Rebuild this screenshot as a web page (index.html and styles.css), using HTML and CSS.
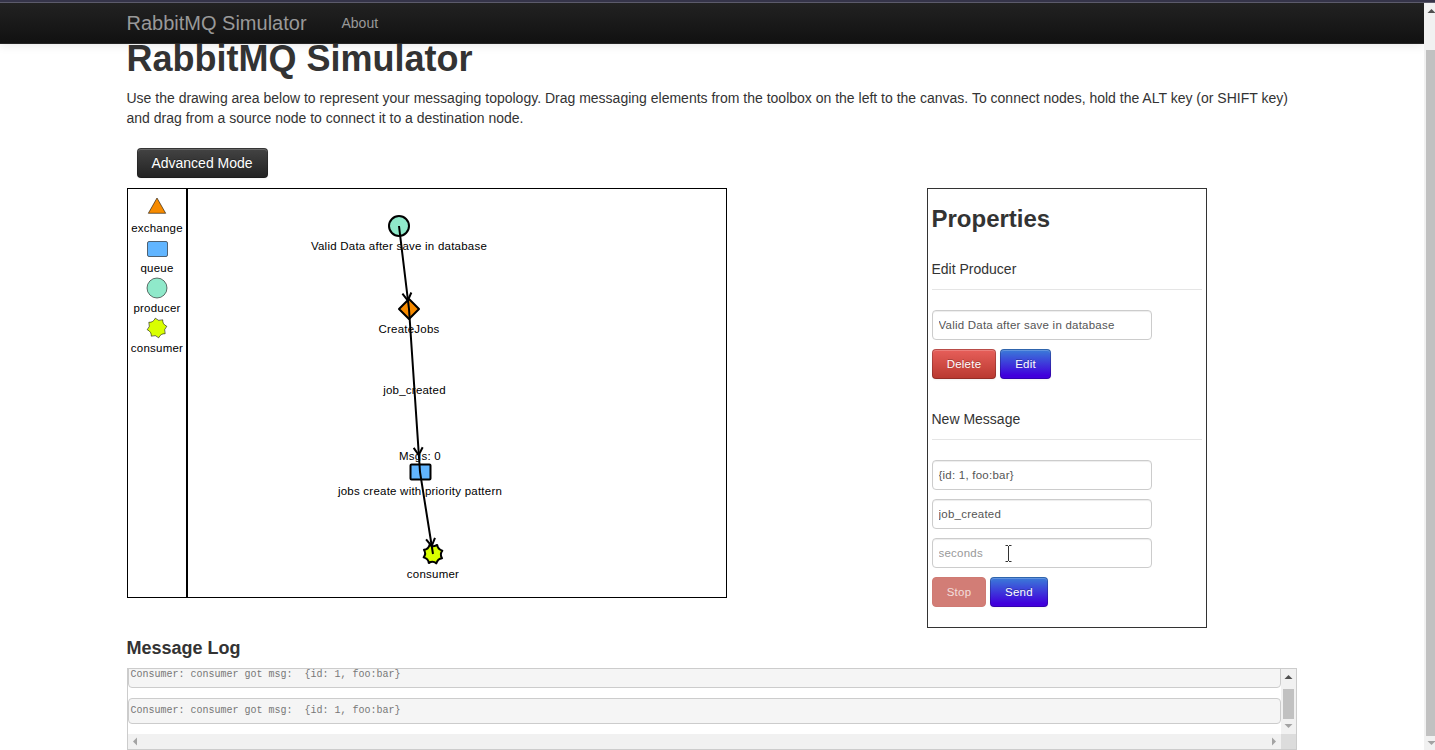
FILE: index.html
```html
<!DOCTYPE html>
<html lang="en">
<head>
<meta charset="utf-8">
<title>RabbitMQ Simulator</title>
<link rel="stylesheet" href="styles.css">
</head>
<body>
<div class="window-edge"></div>
<div class="viewport">
  <div class="page">
    <nav class="navbar">
      <a class="brand">RabbitMQ Simulator</a>
      <a class="nav-link">About</a>
    </nav>
    <main class="container">
      <h1>RabbitMQ Simulator</h1>
      <p class="intro">Use the drawing area below to represent your messaging topology. Drag messaging elements from the toolbox on the left to the canvas. To connect nodes, hold the ALT key (or SHIFT key) and drag from a source node to connect it to a destination node.</p>
      <button class="btn btn-inverse">Advanced Mode</button>
      <div class="workspace">
        <svg class="canvas" width="600" height="410" viewBox="127 188 600 410">
          <defs>
            <path id="gear" d="M-1.700 -9.800Q1.400 -6.300 5.700 -8.200Q5.400 -3.700 9.800 -1.700Q6.300 1.400 8.200 5.700Q3.700 5.400 1.700 9.800Q-1.400 6.300 -5.700 8.200Q-5.400 3.700 -9.800 1.700Q-6.300 -1.400 -8.200 -5.700Q-3.700 -5.400 -1.700 -9.800Z"/>
            <path id="head" d="M-4.500 -7.500L0 0L4.500 -7.500"/>
          </defs>
          <rect x="127.5" y="188.5" width="599" height="409" fill="#fff" stroke="#000"/>
          <path d="M187 188V598" stroke="#000" stroke-width="2"/>
          <g class="tool-shapes">
            <path d="M157 198L165.700 213.300H148.300Z" fill="#f78b00"/>
            <rect x="147.500" y="241.500" width="20" height="15" rx="1.500" fill="#61b5ff"/>
            <circle cx="157" cy="288" r="10" fill="#8fe9ca"/>
            <use href="#gear" x="157" y="328" fill="#d9ff00"/>
          </g>
          <g class="label">
            <text x="157" y="232">exchange</text>
            <text x="157" y="272">queue</text>
            <text x="157" y="312">producer</text>
            <text x="157" y="352">consumer</text>
          </g>
          <g class="node-shapes">
            <circle cx="399" cy="226" r="10" fill="#8fe9ca"/>
            <path d="M409 299L419 309L409 319L399 309Z" fill="#f78b00"/>
            <rect x="410.500" y="464.500" width="20" height="15" rx="1" fill="#61b5ff"/>
            <use href="#gear" transform="translate(433 554) rotate(-10)" fill="#d9ff00"/>
          </g>
          <g class="label">
            <text x="399" y="250">Valid Data after save in database</text>
            <text x="409" y="333">CreateJobs</text>
            <text x="414.500" y="394">job_created</text>
            <text x="420" y="460">Msgs: 0</text>
            <text x="420" y="495">jobs create with priority pattern</text>
            <text x="433" y="578">consumer</text>
          </g>
          <g class="edges">
            <path d="M399 226L409 309L420 472L433 554"/>
            <use href="#head" transform="translate(407.800 300.500) rotate(-7)"/>
            <use href="#head" transform="translate(418.700 455) rotate(-4)"/>
            <use href="#head" transform="translate(431.700 546) rotate(-9)"/>
          </g>
        </svg>
        <section class="properties">
          <h2>Properties</h2>
          <div class="legend">Edit Producer</div>
          <input type="text" value="Valid Data after save in database">
          <div class="actions">
            <button class="btn btn-danger delete">Delete</button>
            <button class="btn btn-primary">Edit</button>
          </div>
          <div class="legend">New Message</div>
          <input type="text" value="{id: 1, foo:bar}">
          <input type="text" value="job_created">
          <div class="field">
            <input type="text" placeholder="seconds">
            <svg class="cursor" width="9" height="19" viewBox="0 0 9 19"><path d="M1.500 1.500H4M5 1.500H7.500M1.500 17.500H4M5 17.500H7.500M4.500 2V17"/></svg>
          </div>
          <div class="actions">
            <button class="btn btn-danger faded">Stop</button>
            <button class="btn btn-primary">Send</button>
          </div>
        </section>
      </div>
      <h4>Message Log</h4>
      <div class="log">
        <div class="log-list">
          <pre class="first">Consumer: consumer got msg:  {id: 1, foo:bar}</pre>
          <pre>Consumer: consumer got msg:  {id: 1, foo:bar}</pre>
        </div>
        <div class="log-vbar">
          <svg width="15" height="65"><path class="strong" d="M3.500 10L7.500 6L11.500 10Z"/><path class="thumb" d="M2 20H13V50H2Z"/><path class="weak" d="M3.500 55H11.500L7.500 59Z"/></svg>
        </div>
        <div class="log-hbar">
          <svg width="10" height="15"><path class="weak" d="M9 3.500V11.500L5 7.500Z"/></svg>
          <svg width="12" height="15"><path class="weak" d="M3 3.500V11.500L7 7.500Z"/></svg>
        </div>
        <div class="log-corner"></div>
      </div>
    </main>
  </div>
  <div class="page-bar">
    <svg width="11" height="747"><path class="strong" d="M3.500 10L7.500 6L11.500 10Z"/><path class="thumb" d="M2 47H11V733H2Z"/><path class="weak" d="M3.500 738H11.500L7.500 742Z"/></svg>
  </div>
</div>
</body>
</html>
```
FILE: styles.css
```css
* { box-sizing: border-box; }
body {
  margin: 0;
  height: 750px;
  overflow: hidden;
  background: #fff;
  color: #333;
  font: 14px/20px "Liberation Sans", Arial, sans-serif;
}
.window-edge { height: 3px; background: #353449; border-bottom: 1px solid #5c5b6b; }
.viewport { display: flex; height: 747px; }
.page { width: 1424px; height: 747px; overflow: hidden; }
.page-bar { width: 11px; background: #f1f1f1; }
svg { display: block; }
.strong { fill: #505050; }
.weak { fill: #a3a3a3; }
.thumb { fill: #c1c1c1; }

.navbar {
  position: relative;
  z-index: 1;
  display: flex;
  align-items: center;
  height: 41px;
  padding-left: 126.5px;
  background: linear-gradient(#222, #111);
  border-bottom: 1px solid #252525;
  box-shadow: 0 1px 10px rgba(0, 0, 0, .1);
  color: #999;
}
.brand { font-size: 20px; width: 215px; }

.container { width: 1170px; margin-left: 127px; }
h1 { margin: -5px 0 9px -.5px; font-size: 36px; line-height: 40px; }
.intro { margin: 0 0 20px -.5px; }
.btn {
  height: 30px;
  padding: 0 14px;
  border: 1px solid rgba(0, 0, 0, .2);
  border-radius: 4px;
  box-shadow: inset 0 1px 0 rgba(255, 255, 255, .2), 0 1px 2px rgba(0, 0, 0, .05);
  color: #fff;
  font: 11.49px/20px "Liberation Sans", Arial, sans-serif;
  letter-spacing: .235px;
  text-shadow: 0 -1px 0 rgba(0, 0, 0, .25);
  white-space: nowrap;
  background-origin: border-box;
}
.btn-inverse {
  display: block;
  width: 131px;
  margin: 0 0 10px 10px;
  padding: 0 1px 0 0;
  font-size: 14px;
  letter-spacing: 0;
  background-image: linear-gradient(#444, #222);
}
.btn-danger { padding: 0; background-image: linear-gradient(#e8605b, #b8382f); }
.delete { width: 64px; }
.btn-primary { min-width: 51px; background-image: linear-gradient(#3a80d8, #4000dc 88%); }
.faded { width: 54px; background: #d27d76; border-color: #cf7a73; box-shadow: none; color: #f2dddb; text-shadow: none; }

.workspace { display: flex; justify-content: space-between; width: 1080px; height: 440px; }
.label text { font: 11.49px "Liberation Sans", Arial, sans-serif; letter-spacing: .235px; text-anchor: middle; fill: #000; }
.tool-shapes { stroke: #000; stroke-opacity: .55; stroke-width: 1; }
.node-shapes { stroke: #000; stroke-width: 2; stroke-linejoin: round; }
.edges { fill: none; stroke: #000; stroke-width: 2; }

.properties { width: 280px; height: 440px; padding: 10px 4px; border: 1px solid #333; }
h2 { margin: 0 0 10px -.5px; font-size: 24px; line-height: 40px; }
.legend { height: 41px; margin-bottom: 20px; line-height: 40px; border-bottom: 1px solid #e5e5e5; text-indent: -.5px; }
input {
  display: block;
  width: 220px;
  height: 30px;
  margin: 0 0 9px;
  padding: 4px 5.5px;
  border: 1px solid #ccc;
  border-radius: 4px;
  box-shadow: inset 0 1px 1px rgba(0, 0, 0, .075);
  color: #555;
  font: 11.49px/20px "Liberation Sans", Arial, sans-serif;
  letter-spacing: .235px;
}
input::placeholder { color: #999; }
.actions { display: flex; gap: 4px; margin-bottom: 20px; }
.field { position: relative; }
.cursor { position: absolute; left: 72px; top: 6px; fill: none; stroke: #333; }

h4 { margin: 10px 0 10px -.5px; font-size: 18px; line-height: 20px; }
.log {
  display: grid;
  grid-template: 65px 15px / 1fr 15px;
  height: 82px;
  border: 1px solid #ccc;
}
.log-list { overflow: hidden; }
.log-vbar { background: #f1f1f1; }
.log-hbar { display: flex; justify-content: space-between; background: #f1f1f1; }
.log-corner { background: #dcdcdc; }
pre {
  height: 26px;
  margin: 0 0 10px;
  padding: 2px 1.5px;
  border: 1px solid #ccc;
  border-radius: 4px;
  background: #f5f5f5;
  color: #777;
  font: 10px/20px "Liberation Mono", monospace;
}
pre.first { margin-top: -7px; }
```
